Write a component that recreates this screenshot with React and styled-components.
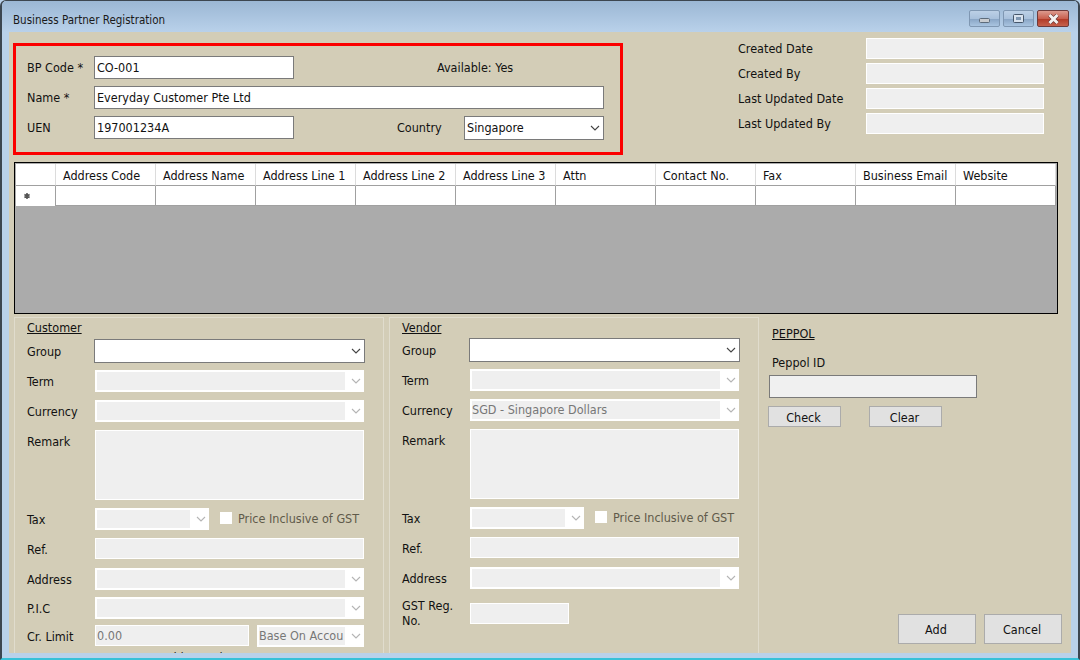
import React from "react";
import styled, { createGlobalStyle } from "styled-components";

const GlobalStyle = createGlobalStyle`
  html, body {
    margin: 0;
    padding: 0;
    background: #b9d1ea;
  }
  body {
    font-family: "DejaVu Sans Condensed", "DejaVu Sans", sans-serif;
    font-size: 12.5px;
    color: #111;
  }
`;

const Window = styled.div`
  width: 1080px;
  height: 660px;
  box-sizing: border-box;
  display: flex;
  flex-direction: column;
  overflow: hidden;
  background: #b9d1ea;
  border-left: 2px solid #3c4650;
  border-right: 2px solid #3c4650;
  border-top: 1px solid #3c4650;
  border-bottom: 2px solid #37c1d8;
  border-radius: 6px 6px 0 0;
`;

const TitleBar = styled.div`
  height: 31px;
  flex: none;
  display: flex;
  align-items: flex-start;
  justify-content: space-between;
  padding: 9px 9px 0 11px;
  box-sizing: border-box;
  background: linear-gradient(#9bb7d4, #b9d1ea);
`;

const Title = styled.span`
  color: #1a1a1a;
  font-size: 11.5px;
  line-height: 20px;
`;

const Controls = styled.div`
  display: flex;
  gap: 3px;
`;

const ControlButton = styled.div`
  width: ${props => (props.close ? "32px" : "31px")};
  height: 17px;
  box-sizing: border-box;
  border: 1px solid ${props => (props.close ? "#6e3a3a" : "#7f97b2")};
  border-radius: 2px;
  display: flex;
  align-items: center;
  justify-content: center;
  background: ${props =>
    props.close
      ? "linear-gradient(#dc9a8e 0%, #c9604f 50%, #b23b28 55%, #c6614c 100%)"
      : "linear-gradient(#bcd0e6 0%, #a9c1dc 50%, #8aa6c6 55%, #a9c4e0 100%)"};
`;

const Client = styled.div`
  width: 1062px;
  height: 621px;
  margin-left: 7px;
  flex: none;
  background: #d3cdb7;
`;

const TopRow = styled.div`
  display: flex;
  height: 130px;
`;

const HighlightBox = styled.div`
  width: 610px;
  height: 112px;
  box-sizing: border-box;
  margin: 11px 0 0 4px;
  border: 3px solid #fb0000;
  padding: 10px 0 0 11px;
  display: flex;
  flex-direction: column;
  gap: 7px;
`;

const FormRow = styled.div`
  display: flex;
  align-items: center;
  height: 23px;
`;

const Label = styled.span`
  width: ${props => props.width || "67px"};
  flex: none;
`;

const Available = styled.span`
  margin-left: 143px;
`;

const CountryLabel = styled.span`
  width: 67px;
  margin-left: 103px;
`;

const TextBox = styled.div`
  width: ${props => props.width || "200px"};
  height: ${props => props.height || "23px"};
  box-sizing: border-box;
  flex: none;
  border: 1px solid #7a7a7a;
  background: #fff;
  padding: 0 2px;
  display: flex;
  align-items: center;
`;

const ReadOnlyBox = styled.div`
  width: ${props => props.width || "269px"};
  height: ${props => props.height || "21px"};
  box-sizing: border-box;
  flex: none;
  border: 1px solid #fff;
  background: #efefef;
  color: #777;
  padding: 0 1px;
  display: flex;
  align-items: center;
`;

const SelectBox = styled.div`
  width: ${props => props.width || "271px"};
  height: ${props => props.height || "24px"};
  margin-left: ${props => props.offset || "0"};
  box-sizing: border-box;
  flex: none;
  border: 1px solid #7a7a7a;
  background: #fff;
  padding: 0 2px;
  display: flex;
  align-items: center;
  justify-content: space-between;
`;

const DisabledSelect = styled.div`
  width: ${props => props.width || "269px"};
  height: 22px;
  box-sizing: border-box;
  flex: none;
  background: #fff;
  padding: 2px;
  display: flex;
  align-items: stretch;
  gap: 6px;
`;

const DisabledValue = styled.div`
  flex: 1;
  min-width: 0;
  overflow: hidden;
  white-space: nowrap;
  background: #efefef;
  color: #777;
  line-height: 18px;
`;

const ChevronIcon = styled.svg`
  flex: none;
  align-self: center;
  margin-right: 1px;
`;

const Chevron = ({ muted }) => (
  <ChevronIcon width="10" height="6" viewBox="0 0 10 6">
    <path d="M1 1l4 4 4-4" fill="none" stroke={muted ? "#b5b5b5" : "#444"} strokeWidth="1.1" />
  </ChevronIcon>
);

const AuditPanel = styled.div`
  margin: 6px 0 0 115px;
  display: flex;
  flex-direction: column;
  gap: 4px;
`;

const AuditRow = styled.div`
  display: flex;
  align-items: center;
  height: 21px;
`;

const AddressGrid = styled.div`
  width: 1044px;
  height: 152px;
  box-sizing: border-box;
  margin-left: 5px;
  border: 1px solid #000;
  padding: 1px 1px 0;
  background: #ababab;
`;

const GridRow = styled.div`
  display: grid;
  grid-template-columns: 40px repeat(10, 100px);
  height: ${props => props.height};
`;

const HeaderCell = styled.div`
  background: #fff;
  border-right: 1px solid #dcdcdc;
  border-bottom: 1px solid #a0a0a0;
  padding: 1px 0 0 7px;
  display: flex;
  align-items: center;
  white-space: nowrap;
  overflow: hidden;
`;

const BodyCell = styled.div`
  background: #fff;
  border-right: 1px solid #a0a0a0;
  border-bottom: 1px solid #a0a0a0;
`;

const RowMarker = styled.div`
  background: #fff;
  border-right: 1px solid #a0a0a0;
  padding: 7px 0 0 8px;
  box-sizing: border-box;
`;

const MarkerIcon = styled.svg`
  display: block;
`;

const BottomRow = styled.div`
  display: flex;
  margin-top: 3px;
  height: 336px;
`;

const GroupPanel = styled.div`
  width: 370px;
  height: 336px;
  box-sizing: border-box;
  flex: none;
  margin-left: 5px;
  border: 1px solid #e0dccd;
  border-bottom: none;
  padding: 2px 0 0 12px;
  overflow: hidden;
`;

const SectionTitle = styled.span`
  display: block;
  text-decoration: underline;
  line-height: 15px;
  margin-bottom: ${props => props.gap || "4px"};
`;

const FieldRow = styled.div`
  display: flex;
  align-items: ${props => (props.top ? "flex-start" : "center")};
  margin-top: ${props => props.gap || "8px"};
  height: ${props => props.height || "22px"};
`;

const FieldLabel = styled.span`
  width: 68px;
  flex: none;
  line-height: 15px;
  padding-top: ${props => (props.top ? "4px" : props.nudge || "0")};
`;

const CheckBox = styled.div`
  width: 12px;
  height: 12px;
  flex: none;
  background: #fff;
  margin: 0 6px 2px 11px;
`;

const CheckLabel = styled.span`
  color: #5f5a4a;
  white-space: nowrap;
  margin-bottom: 2px;
`;

const LimitSelect = styled.div`
  margin-left: 8px;
`;

const ClippedLabel = styled.div`
  margin: 4px 0 0 135px;
  line-height: 15px;
  white-space: nowrap;
`;

const PeppolPanel = styled.div`
  flex: 1;
  height: 327px;
  box-sizing: border-box;
  display: flex;
  flex-direction: column;
  padding: 9px 9px 0 10px;
`;

const PeppolInput = styled(TextBox)`
  background: #f0f0f0;
  margin-top: 5px;
`;

const PeppolLabel = styled.span`
  margin: 14px 0 0 3px;
  line-height: 15px;
`;

const PeppolTitle = styled.span`
  margin-left: 3px;
  text-decoration: underline;
  line-height: 15px;
`;

const ButtonRow = styled.div`
  display: flex;
  gap: ${props => props.gap};
  margin: ${props => props.margin};
  justify-content: ${props => (props.end ? "flex-end" : "flex-start")};
`;

const Button = styled.button`
  width: ${props => props.width};
  height: ${props => props.height};
  box-sizing: border-box;
  border: 1px solid #ababab;
  background: #e1e1e1;
  color: #111;
  font: inherit;
  padding: 1px 2px 0 0;
`;

const columns = [
  "Address Code",
  "Address Name",
  "Address Line 1",
  "Address Line 2",
  "Address Line 3",
  "Attn",
  "Contact No.",
  "Fax",
  "Business Email",
  "Website",
];

const audit = ["Created Date", "Created By", "Last Updated Date", "Last Updated By"];

const Disabled = ({ width, value }) => (
  <DisabledSelect width={width}>
    <DisabledValue>{value}</DisabledValue>
    <Chevron muted />
  </DisabledSelect>
);

const PartnerFields = ({ currency, children }) => (
  <>
    <FieldRow gap="0" height="24px">
      <FieldLabel>Group</FieldLabel>
      <SelectBox offset="-1px">
        <span />
        <Chevron />
      </SelectBox>
    </FieldRow>
    <FieldRow gap="7px">
      <FieldLabel>Term</FieldLabel>
      <Disabled />
    </FieldRow>
    <FieldRow>
      <FieldLabel>Currency</FieldLabel>
      <Disabled value={currency} />
    </FieldRow>
    <FieldRow top height="70px">
      <FieldLabel top>Remark</FieldLabel>
      <ReadOnlyBox height="70px" />
    </FieldRow>
    <FieldRow>
      <FieldLabel>Tax</FieldLabel>
      <Disabled width="114px" />
      <CheckBox />
      <CheckLabel>Price Inclusive of GST</CheckLabel>
    </FieldRow>
    <FieldRow height="21px">
      <FieldLabel nudge="2px">Ref.</FieldLabel>
      <ReadOnlyBox />
    </FieldRow>
    <FieldRow gap="9px">
      <FieldLabel>Address</FieldLabel>
      <Disabled />
    </FieldRow>
    {children}
  </>
);

const App = () => (
  <>
    <GlobalStyle />
    <Window>
      <TitleBar>
        <Title>Business Partner Registration</Title>
        <Controls>
          <ControlButton>
            <svg width="11" height="9" viewBox="0 0 11 9">
              <rect x="0.5" y="4.5" width="10" height="4" rx="1" fill="#c9ccd0" stroke="#5d6b7a" />
            </svg>
          </ControlButton>
          <ControlButton>
            <svg width="11" height="9" viewBox="0 0 11 9">
              <rect x="0.5" y="0.5" width="10" height="8" rx="1" fill="#d8e2ee" stroke="#46566a" />
              <rect x="3" y="3" width="5" height="3" fill="#7f97b2" />
            </svg>
          </ControlButton>
          <ControlButton close>
            <svg width="13" height="10" viewBox="0 0 13 10">
              <path d="M2.5 1l8 8M10.5 1l-8 8" stroke="#5a2a2a" strokeWidth="4" />
              <path d="M2.5 1l8 8M10.5 1l-8 8" stroke="#f4f1f0" strokeWidth="3" />
            </svg>
          </ControlButton>
        </Controls>
      </TitleBar>
      <Client>
        <TopRow>
          <HighlightBox>
            <FormRow>
              <Label>BP Code *</Label>
              <TextBox>CO-001</TextBox>
              <Available>Available: Yes</Available>
            </FormRow>
            <FormRow>
              <Label>Name *</Label>
              <TextBox width="510px">Everyday Customer Pte Ltd</TextBox>
            </FormRow>
            <FormRow>
              <Label>UEN</Label>
              <TextBox>197001234A</TextBox>
              <CountryLabel>Country</CountryLabel>
              <SelectBox width="140px">
                <span>Singapore</span>
                <Chevron />
              </SelectBox>
            </FormRow>
          </HighlightBox>
          <AuditPanel>
            {audit.map(name => (
              <AuditRow key={name}>
                <Label width="128px">{name}</Label>
                <ReadOnlyBox width="178px" />
              </AuditRow>
            ))}
          </AuditPanel>
        </TopRow>
        <AddressGrid>
          <GridRow height="22px">
            <HeaderCell />
            {columns.map(name => (
              <HeaderCell key={name}>{name}</HeaderCell>
            ))}
          </GridRow>
          <GridRow height="20px">
            <RowMarker>
              <MarkerIcon width="6" height="6" viewBox="0 0 6 6">
                <path d="M3 0v6M0.4 1.5l5.2 3M5.6 1.5l-5.2 3" stroke="#555" strokeWidth="1.6" />
              </MarkerIcon>
            </RowMarker>
            {columns.map(name => (
              <BodyCell key={name} />
            ))}
          </GridRow>
        </AddressGrid>
        <BottomRow>
          <GroupPanel>
            <SectionTitle>Customer</SectionTitle>
            <PartnerFields>
              <FieldRow gap="7px">
                <FieldLabel>P.I.C</FieldLabel>
                <Disabled />
              </FieldRow>
              <FieldRow gap="6px" height="21px">
                <FieldLabel nudge="2px">Cr. Limit</FieldLabel>
                <ReadOnlyBox width="154px">0.00</ReadOnlyBox>
                <LimitSelect>
                  <Disabled width="107px" value="Base On Accou" />
                </LimitSelect>
              </FieldRow>
              <ClippedLabel>Add on Bal</ClippedLabel>
            </PartnerFields>
          </GroupPanel>
          <GroupPanel>
            <SectionTitle gap="3px">Vendor</SectionTitle>
            <PartnerFields currency="SGD - Singapore Dollars">
              <FieldRow height="32px">
                <FieldLabel>GST Reg. No.</FieldLabel>
                <ReadOnlyBox width="99px" />
              </FieldRow>
            </PartnerFields>
          </GroupPanel>
          <PeppolPanel>
            <PeppolTitle>PEPPOL</PeppolTitle>
            <PeppolLabel>Peppol ID</PeppolLabel>
            <PeppolInput width="208px" />
            <ButtonRow gap="28px" margin="8px 0 0 -1px">
              <Button width="73px" height="21px">Check</Button>
              <Button width="73px" height="21px">Clear</Button>
            </ButtonRow>
            <ButtonRow end gap="8px" margin="auto 0 0 0">
              <Button width="78px" height="30px">Add</Button>
              <Button width="78px" height="30px">Cancel</Button>
            </ButtonRow>
          </PeppolPanel>
        </BottomRow>
      </Client>
    </Window>
  </>
);

export default App;
